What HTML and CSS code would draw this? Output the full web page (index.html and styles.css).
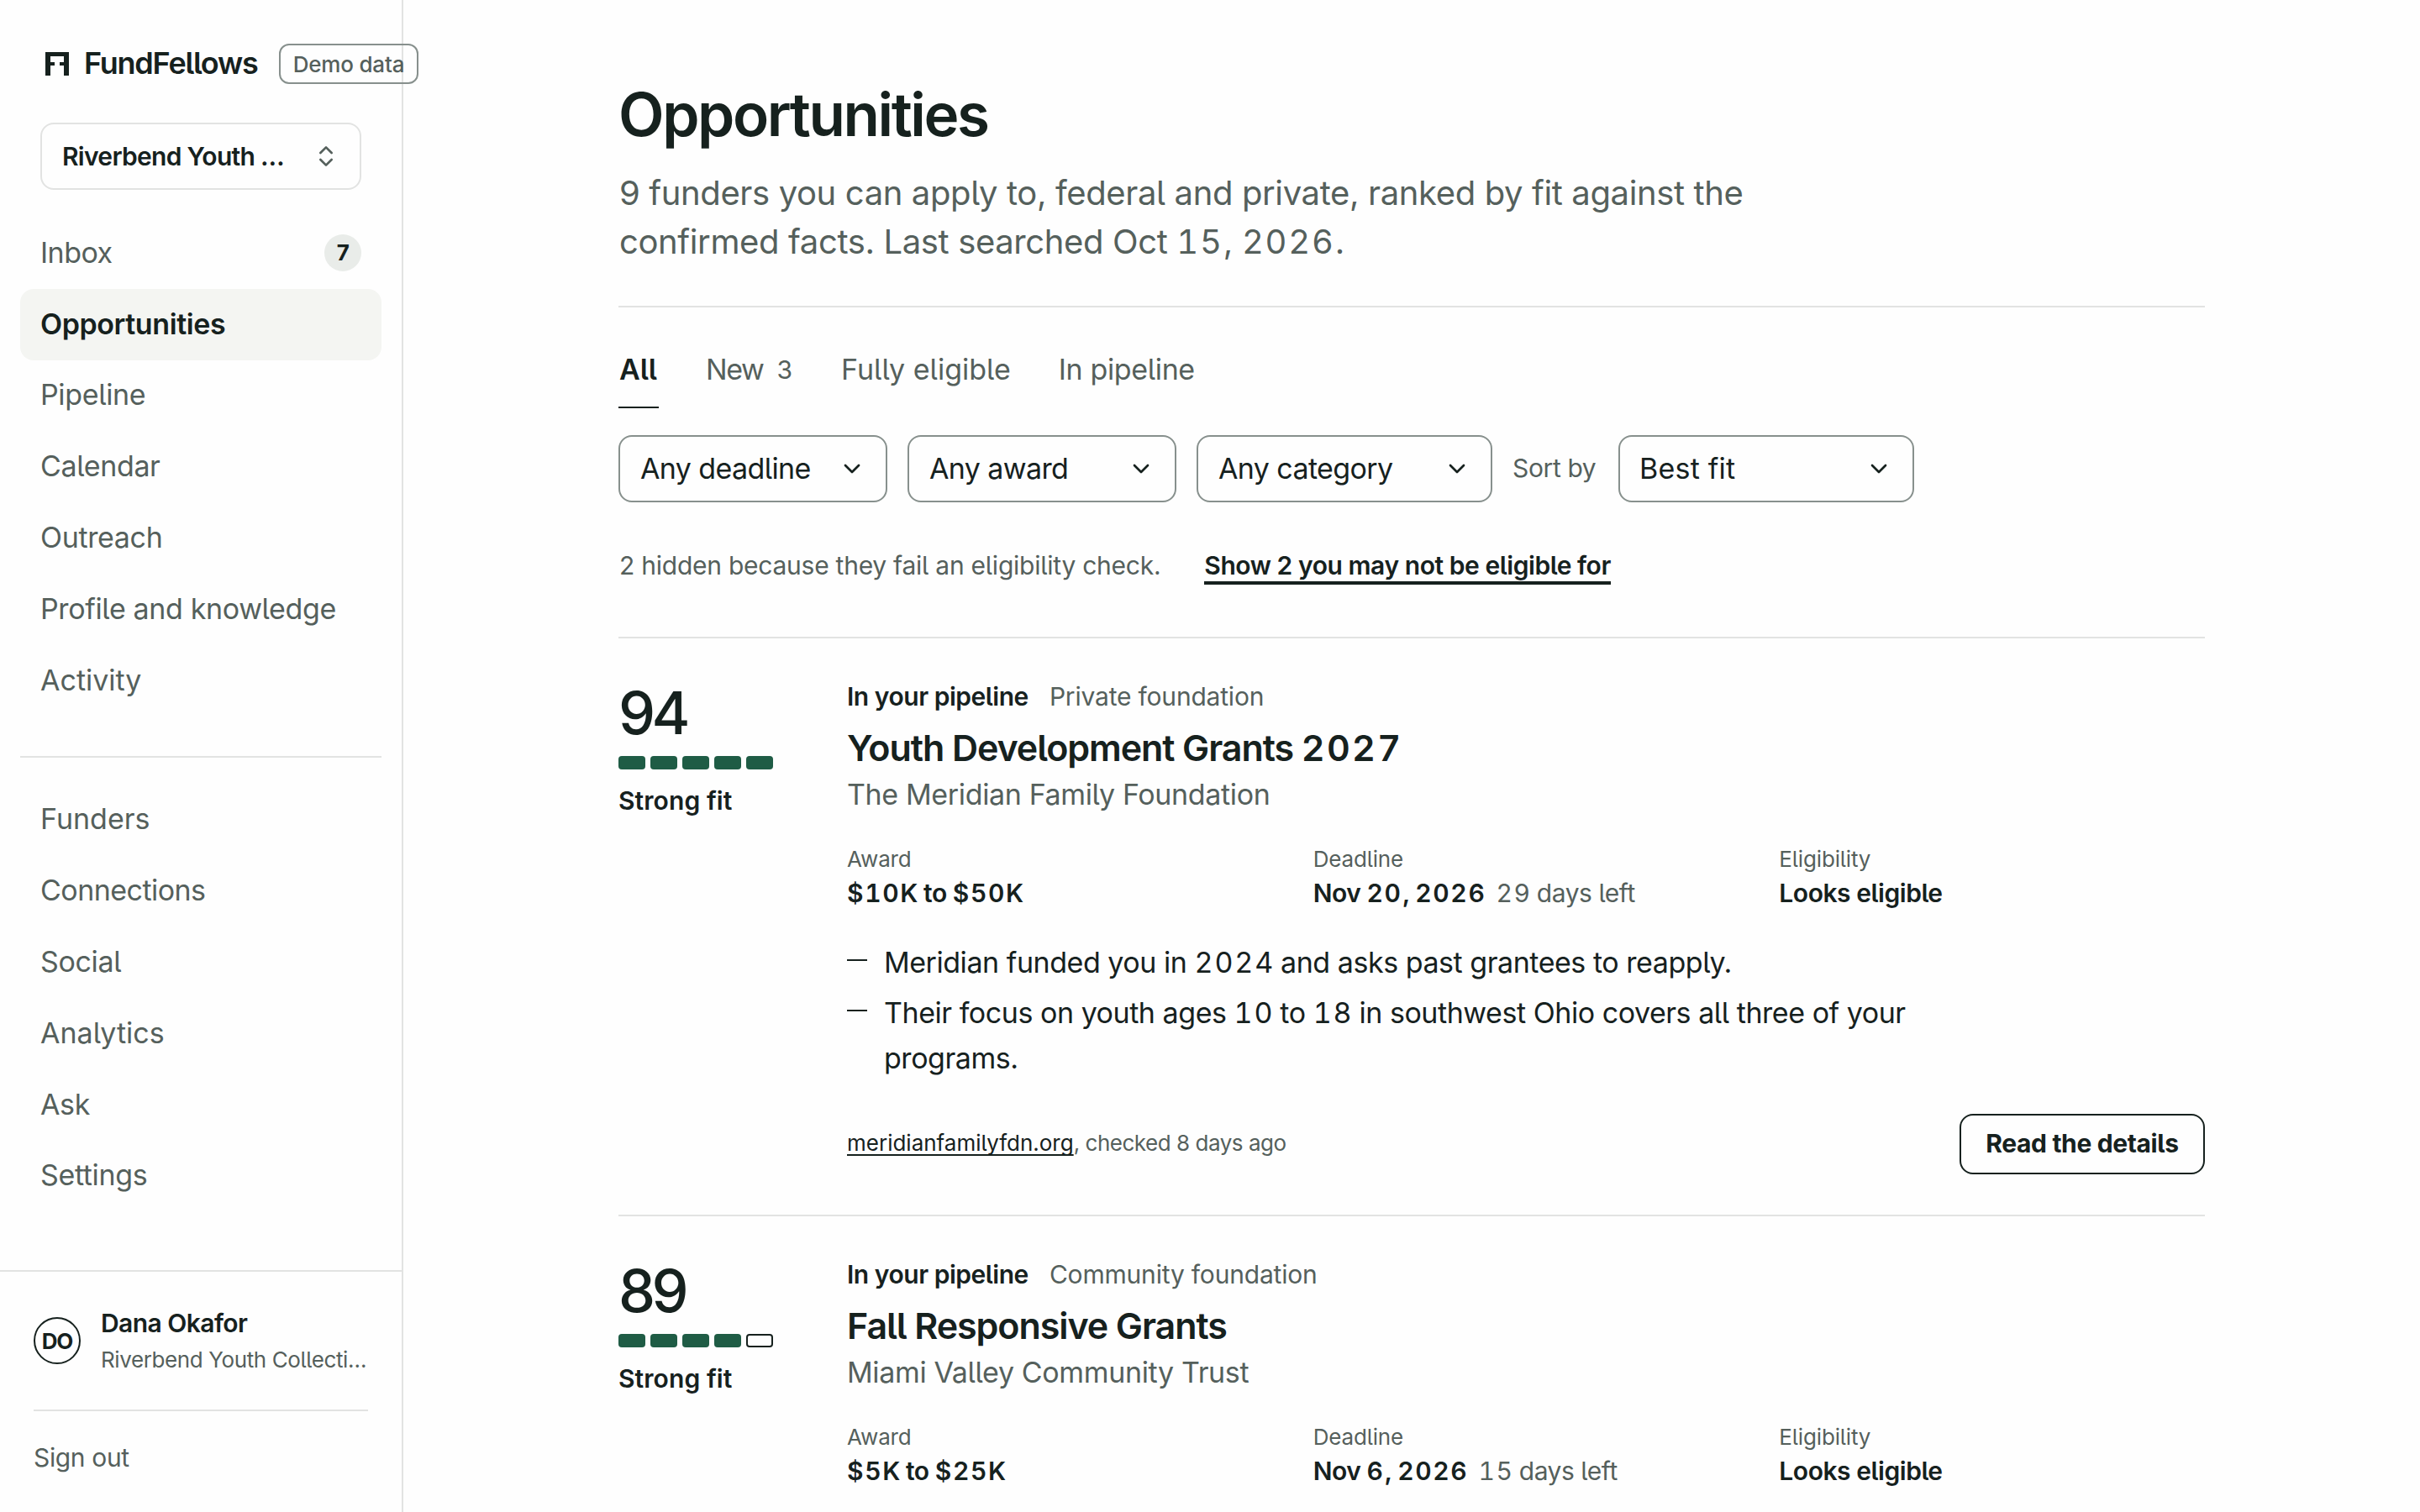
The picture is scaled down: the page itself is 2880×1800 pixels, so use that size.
FILE: index.html
```html
<!DOCTYPE html>
<html lang="en">
<head>
<meta charset="utf-8">
<title>Opportunities · FundFellows</title>
<link rel="stylesheet" href="styles.css">
</head>
<body>
<div class="app">
  <aside class="sidebar">
    <div class="brand">
      <svg class="brand-mark" viewBox="0 0 28 28" aria-hidden="true"><path d="M0 0h28v28h-6V16h-5v-4h5V5H6v7h5v4H6v12H0z"/></svg>
      <span class="brand-name">FundFellows</span>
      <span class="pill">Demo data</span>
    </div>
    <button class="org">
      <span class="org-name">Riverbend Youth …</span>
      <svg class="icon icon-muted" viewBox="0 0 24 24" aria-hidden="true"><path d="m7 15 5 5 5-5M7 9l5-5 5 5"/></svg>
    </button>
    <nav class="nav">
      <a class="nav-item tight">Inbox<span class="count">7</span></a>
      <a class="nav-item active">Opportunities</a>
      <a class="nav-item">Pipeline</a>
      <a class="nav-item">Calendar</a>
      <a class="nav-item">Outreach</a>
      <a class="nav-item">Profile and knowledge</a>
      <a class="nav-item loose">Activity</a>
    </nav>
    <nav class="nav nav-more">
      <a class="nav-item loose">Funders</a>
      <a class="nav-item tight">Connections</a>
      <a class="nav-item">Social</a>
      <a class="nav-item loose">Analytics</a>
      <a class="nav-item">Ask</a>
      <a class="nav-item">Settings</a>
    </nav>
    <div class="account">
      <div class="user">
        <span class="avatar">DO</span>
        <div class="user-text">
          <div class="user-name">Dana Okafor</div>
          <div class="user-org">Riverbend Youth Collecti…</div>
        </div>
      </div>
      <a class="sign-out">Sign out</a>
    </div>
  </aside>

  <main class="main">
    <header class="page-head">
      <h1>Opportunities</h1>
      <p class="lede">9 funders you can apply to, federal and private, ranked by fit against the confirmed facts. Last searched Oct <span class="num">15</span>, <span class="num">2026</span>.</p>
    </header>

    <div class="tabs">
      <a class="tab selected">All</a>
      <a class="tab tab-new">New<span class="tab-count">3</span></a>
      <a class="tab loose">Fully eligible</a>
      <a class="tab">In pipeline</a>
    </div>

    <div class="filters">
      <div class="select">Any deadline<svg class="icon" viewBox="0 0 24 24" aria-hidden="true"><path d="m6 9 6 6 6-6"/></svg></div>
      <div class="select">Any award<svg class="icon" viewBox="0 0 24 24" aria-hidden="true"><path d="m6 9 6 6 6-6"/></svg></div>
      <div class="select select-wide">Any category<svg class="icon" viewBox="0 0 24 24" aria-hidden="true"><path d="m6 9 6 6 6-6"/></svg></div>
      <span class="sort-label">Sort by</span>
      <div class="select select-wide loose">Best fit<svg class="icon" viewBox="0 0 24 24" aria-hidden="true"><path d="m6 9 6 6 6-6"/></svg></div>
    </div>

    <div class="hidden-note">
      <span>2 hidden because they fail an eligibility check.</span>
      <a class="show-link">Show 2 you may not be eligible for</a>
    </div>

    <article class="card">
      <div class="fit">
        <div class="score">94</div>
        <div class="meter"><i></i><i></i><i></i><i></i><i></i></div>
        <div class="fit-label">Strong fit</div>
      </div>
      <div class="details">
        <div class="meta"><strong>In your pipeline</strong><span>Private foundation</span></div>
        <h2>Youth Development Grants <span class="num">2027</span></h2>
        <p class="funder">The Meridian Family Foundation</p>
        <dl class="facts">
          <div><dt>Award</dt><dd><span class="num">$10</span>K to <span class="num">$50</span>K</dd></div>
          <div><dt>Deadline</dt><dd>Nov <span class="num">20</span>, <span class="num">2026</span><span class="left"><span class="num pair">29</span> days left</span></dd></div>
          <div><dt>Eligibility</dt><dd>Looks eligible</dd></div>
        </dl>
        <ul class="reasons">
          <li>Meridian funded you in <span class="num pair">2024</span> and asks past grantees to reapply.</li>
          <li>Their focus on youth ages <span class="num pair">10</span> to <span class="num pair">18</span> in southwest Ohio covers all three of your programs.</li>
        </ul>
        <div class="card-foot">
          <span class="source"><a>meridianfamilyfdn.org</a>, checked 8 days ago</span>
          <button class="button">Read the details</button>
        </div>
      </div>
    </article>

    <article class="card">
      <div class="fit">
        <div class="score">89</div>
        <div class="meter"><i></i><i></i><i></i><i></i><i class="empty"></i></div>
        <div class="fit-label">Strong fit</div>
      </div>
      <div class="details">
        <div class="meta"><strong>In your pipeline</strong><span>Community foundation</span></div>
        <h2>Fall Responsive Grants</h2>
        <p class="funder">Miami Valley Community Trust</p>
        <dl class="facts">
          <div><dt>Award</dt><dd><span class="num">$5</span>K to <span class="num">$25</span>K</dd></div>
          <div><dt>Deadline</dt><dd>Nov <span class="num">6</span>, <span class="num">2026</span><span class="left"><span class="num pair">15</span> days left</span></dd></div>
          <div><dt>Eligibility</dt><dd>Looks eligible</dd></div>
        </dl>
      </div>
    </article>
  </main>
</div>
</body>
</html>
```
FILE: styles.css
```css
:root {
  --ink: #16211e;
  --muted: #55605c;
  --line: #e2e3e2;
  --edge: #87908d;
  --green: #1f5c45;
  --paper: #fefefe;
}

* { box-sizing: border-box; }

body {
  margin: 0;
  background: var(--paper);
  color: var(--ink);
  font-family: Inter, "Liberation Sans", sans-serif;
  font-feature-settings: "cv05";
  font-size: 34px;
  line-height: 54px;
  letter-spacing: -0.0105em;
}

h1, h2, p, ul, dl, dd { margin: 0; padding: 0; }
button { font: inherit; color: inherit; letter-spacing: inherit; background: none; }
svg { display: block; flex: none; }

.app { display: flex; height: 1800px; overflow: hidden; }

.icon {
  width: 32px;
  height: 32px;
  fill: none;
  stroke: currentColor;
  stroke-width: 2;
  stroke-linecap: round;
  stroke-linejoin: round;
}
.icon-muted { color: var(--muted); }

.num {
  font-feature-settings: "cv05", "tnum";
  letter-spacing: 0.055em;
}
.pair { margin-right: -0.065em; }

/* Sidebar */
.sidebar {
  width: 480px;
  flex: none;
  display: flex;
  flex-direction: column;
  border-right: 2px solid var(--line);
  white-space: nowrap;
}

.brand { display: flex; align-items: center; height: 48px; margin: 52px 0 0 54px; }
.brand-mark { flex: none; width: 28px; height: 28px; fill: var(--ink); }
.brand-name {
  flex: none;
  width: 232px;
  margin-left: 18px;
  padding-bottom: 2px;
  font-size: 36px;
  font-weight: 600;
  letter-spacing: -0.0338em;
}
.pill {
  flex: none;
  width: 166px;
  height: 48px;
  border: 2px solid var(--edge);
  border-radius: 12px;
  color: var(--muted);
  font-size: 26px;
  font-weight: 500;
  line-height: 45px;
  letter-spacing: -0.0076em;
  text-align: center;
}

.org {
  display: flex;
  align-items: center;
  justify-content: space-between;
  width: 382px;
  height: 80px;
  margin: 46px 0 33px 48px;
  padding: 0 24px 1px;
  border: 2px solid var(--line);
  border-radius: 16px;
  font-size: 30px;
  font-weight: 600;
  letter-spacing: -0.0236em;
}

.nav { margin: 0 24px; }
.nav-item {
  display: flex;
  align-items: center;
  justify-content: space-between;
  height: 84.8px;
  padding: 0 24px 1px;
  border-radius: 16px;
  color: var(--muted);
}
.nav-item.active { background: #f4f5f2; color: var(--ink); font-weight: 600; letter-spacing: -0.0123em; }
.nav-item.tight { letter-spacing: -0.016em; }
.loose { letter-spacing: 0; }
.nav-more { margin-top: 47px; padding-top: 32px; border-top: 2px solid var(--line); }
.count {
  width: 44px;
  height: 44px;
  border-radius: 50%;
  background: #e9ece9;
  color: var(--ink);
  font-size: 26px;
  font-weight: 700;
  line-height: 44px;
  text-align: center;
}

.account { height: 288px; margin-top: auto; border-top: 2px solid var(--line); padding: 39px 40px 0; }
.user { display: flex; align-items: center; padding-bottom: 39px; border-bottom: 2px solid var(--line); }
.avatar {
  width: 56px;
  height: 56px;
  margin-right: 24px;
  border: 2px solid var(--ink);
  border-radius: 50%;
  font-size: 26px;
  font-weight: 700;
  line-height: 53px;
  letter-spacing: -0.04em;
  text-align: center;
}
.user-name { font-size: 30px; font-weight: 600; line-height: 44px; letter-spacing: -0.0187em; }
.user-org { padding-top: 1px; color: var(--muted); font-size: 26px; line-height: 41px; letter-spacing: -0.0149em; }
.sign-out { display: block; margin-top: 33px; color: var(--muted); font-size: 30px; line-height: 44px; }

/* Page */
.main { flex: none; width: 2144px; padding: 96px 0 0 256px; }

.page-head { height: 270px; border-bottom: 2px solid var(--line); }
h1 { font-size: 71px; font-weight: 600; line-height: 80px; letter-spacing: -0.0341em; }
.lede {
  max-width: 1380px;
  margin: 25px 0 0 1px;
  color: var(--muted);
  font-size: 40px;
  line-height: 58px;
  letter-spacing: -0.0093em;
}
.lede .num { letter-spacing: 0.045em; }

.tabs { display: flex; gap: 56px; margin-top: 49px; }
.tab { padding: 0 0 19px 1px; border-bottom: 2px solid transparent; color: var(--muted); line-height: 50px; }
.tab.selected { width: 48px; border-color: var(--ink); color: var(--ink); font-weight: 600; letter-spacing: 0; }
.tab-new { width: 104px; padding-left: 0; letter-spacing: -0.04em; }
.tab-count { margin-left: 16px; font-size: 30px; vertical-align: 1px; line-height: 1; }

.filters { display: flex; align-items: center; gap: 24px; margin-top: 32px; }
.select {
  display: flex;
  align-items: center;
  justify-content: space-between;
  width: 320px;
  height: 80px;
  padding: 0 24px;
  border: 2px solid var(--edge);
  border-radius: 16px;
  letter-spacing: -0.018em;
}
.select-wide { width: 352px; }
.select.loose { padding-left: 23px; letter-spacing: 0.006em; }
.sort-label { width: 102px; color: var(--muted); font-size: 30px; padding-bottom: 2px; letter-spacing: -0.012em; white-space: nowrap; }

.hidden-note {
  display: flex;
  align-items: baseline;
  gap: 52px;
  height: 44px;
  margin: 54px 0 62px 1px;
  color: var(--muted);
  font-size: 30px;
  line-height: 42px;
  letter-spacing: -0.0082em;
  white-space: nowrap;
}
.show-link {
  border-bottom: 4px solid var(--ink);
  color: var(--ink);
  font-weight: 600;
  line-height: 38px;
  letter-spacing: -0.0145em;
}

/* Opportunity card */
.card {
  display: grid;
  grid-template-columns: 184px 1fr;
  column-gap: 88px;
  padding: 48px 0;
  border-top: 2px solid var(--line);
}
.score { padding-top: 1px; font-size: 70px; font-weight: 500; line-height: 80px; letter-spacing: -0.065em; }
.meter { display: flex; gap: 6px; margin-top: 11px; }
.meter i { width: 32px; height: 16px; border-radius: 4px; background: var(--green); }
.meter .empty { border: 2px solid var(--ink); background: none; }
.fit-label { margin-top: 15px; font-size: 30px; font-weight: 600; line-height: 44px; letter-spacing: 0.003em; }

.meta { display: flex; gap: 25px; font-size: 30px; line-height: 42px; letter-spacing: -0.0065em; }
.meta strong { font-weight: 600; letter-spacing: -0.0155em; }
.meta span { color: var(--muted); }
h2 { margin-top: 12px; font-size: 43px; font-weight: 600; line-height: 56px; letter-spacing: -0.025em; }
.funder { margin-top: 3px; color: var(--muted); line-height: 50px; }

.facts { display: grid; grid-template-columns: repeat(3, 1fr); gap: 48px; margin-top: 33px; white-space: nowrap; }
dt { color: var(--muted); font-size: 26px; line-height: 38px; letter-spacing: -0.006em; }
dd { font-size: 30px; font-weight: 600; line-height: 42px; letter-spacing: -0.015em; }
.left { margin-left: 12px; color: var(--muted); font-weight: 400; }

.reasons { width: 1300px; margin-top: 35px; list-style: none; letter-spacing: -0.0135em; }
.reasons li { position: relative; padding-left: 44px; }
.reasons li + li { margin-top: 6px; }
.reasons li::before { content: ""; position: absolute; left: 0; top: 23px; width: 24px; height: 2px; background: var(--ink); }

.card-foot { display: flex; align-items: center; justify-content: space-between; margin-top: 39px; }
.source { padding-bottom: 2px; color: var(--muted); font-size: 26px; letter-spacing: -0.0182em; }
.source a {
  color: var(--ink);
  letter-spacing: 0;
  text-decoration: underline;
  text-decoration-thickness: 2px;
  text-underline-offset: 4px;
  text-decoration-skip-ink: none;
}
.button {
  width: 292px;
  height: 72px;
  padding: 0 0 2px;
  border: 2px solid var(--ink);
  border-radius: 16px;
  font-size: 30px;
  font-weight: 700;
}
```
